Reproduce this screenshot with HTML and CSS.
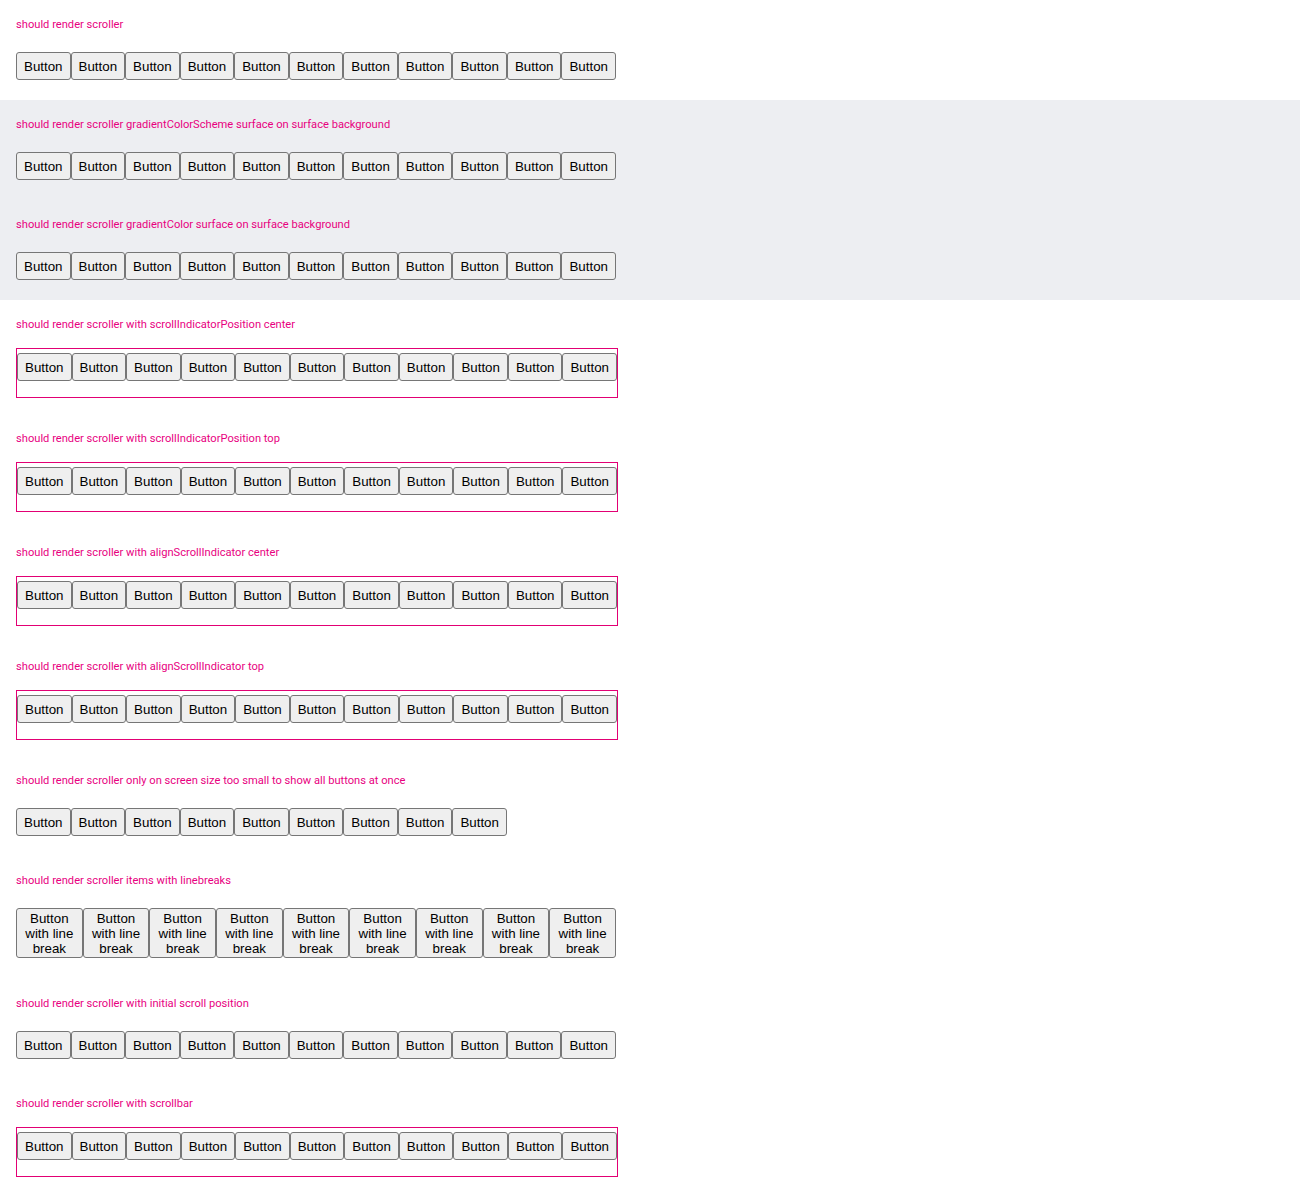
FILE: index.html
```html
<!DOCTYPE html>
<html>
<head>
<meta charset="utf-8">
<link rel="stylesheet" href="styles.css">
</head>
<body>
<div class="section">
  <div class="label">should render scroller</div>
  <div class="scroller">
    <button class="btn">Button</button><button class="btn">Button</button><button class="btn">Button</button><button class="btn">Button</button><button class="btn">Button</button><button class="btn">Button</button><button class="btn">Button</button><button class="btn">Button</button><button class="btn">Button</button><button class="btn">Button</button><button class="btn">Button</button>
  </div>
</div>
<div class="surface">
  <div class="section">
    <div class="label">should render scroller gradientColorScheme surface on surface background</div>
    <div class="scroller">
      <button class="btn">Button</button><button class="btn">Button</button><button class="btn">Button</button><button class="btn">Button</button><button class="btn">Button</button><button class="btn">Button</button><button class="btn">Button</button><button class="btn">Button</button><button class="btn">Button</button><button class="btn">Button</button><button class="btn">Button</button>
    </div>
  </div>
  <div class="section">
    <div class="label">should render scroller gradientColor surface on surface background</div>
    <div class="scroller">
      <button class="btn">Button</button><button class="btn">Button</button><button class="btn">Button</button><button class="btn">Button</button><button class="btn">Button</button><button class="btn">Button</button><button class="btn">Button</button><button class="btn">Button</button><button class="btn">Button</button><button class="btn">Button</button><button class="btn">Button</button>
    </div>
  </div>
</div>
<div class="section boxed">
  <div class="label">should render scroller with scrollIndicatorPosition center</div>
  <div class="scroller framed">
    <button class="btn">Button</button><button class="btn">Button</button><button class="btn">Button</button><button class="btn">Button</button><button class="btn">Button</button><button class="btn">Button</button><button class="btn">Button</button><button class="btn">Button</button><button class="btn">Button</button><button class="btn">Button</button><button class="btn">Button</button>
  </div>
</div>
<div class="section boxed">
  <div class="label">should render scroller with scrollIndicatorPosition top</div>
  <div class="scroller framed">
    <button class="btn">Button</button><button class="btn">Button</button><button class="btn">Button</button><button class="btn">Button</button><button class="btn">Button</button><button class="btn">Button</button><button class="btn">Button</button><button class="btn">Button</button><button class="btn">Button</button><button class="btn">Button</button><button class="btn">Button</button>
  </div>
</div>
<div class="section boxed">
  <div class="label">should render scroller with alignScrollIndicator center</div>
  <div class="scroller framed">
    <button class="btn">Button</button><button class="btn">Button</button><button class="btn">Button</button><button class="btn">Button</button><button class="btn">Button</button><button class="btn">Button</button><button class="btn">Button</button><button class="btn">Button</button><button class="btn">Button</button><button class="btn">Button</button><button class="btn">Button</button>
  </div>
</div>
<div class="section boxed">
  <div class="label">should render scroller with alignScrollIndicator top</div>
  <div class="scroller framed">
    <button class="btn">Button</button><button class="btn">Button</button><button class="btn">Button</button><button class="btn">Button</button><button class="btn">Button</button><button class="btn">Button</button><button class="btn">Button</button><button class="btn">Button</button><button class="btn">Button</button><button class="btn">Button</button><button class="btn">Button</button>
  </div>
</div>
<div class="section">
  <div class="label">should render scroller only on screen size too small to show all buttons at once</div>
  <div class="scroller">
    <button class="btn">Button</button><button class="btn">Button</button><button class="btn">Button</button><button class="btn">Button</button><button class="btn">Button</button><button class="btn">Button</button><button class="btn">Button</button><button class="btn">Button</button><button class="btn">Button</button>
  </div>
</div>
<div class="section tall">
  <div class="label">should render scroller items with linebreaks</div>
  <div class="scroller">
    <button class="btn wrap">Button with line break</button><button class="btn wrap">Button with line break</button><button class="btn wrap">Button with line break</button><button class="btn wrap">Button with line break</button><button class="btn wrap">Button with line break</button><button class="btn wrap">Button with line break</button><button class="btn wrap">Button with line break</button><button class="btn wrap">Button with line break</button><button class="btn wrap">Button with line break</button>
  </div>
</div>
<div class="section">
  <div class="label">should render scroller with initial scroll position</div>
  <div class="scroller">
    <button class="btn">Button</button><button class="btn">Button</button><button class="btn">Button</button><button class="btn">Button</button><button class="btn">Button</button><button class="btn">Button</button><button class="btn">Button</button><button class="btn">Button</button><button class="btn">Button</button><button class="btn">Button</button><button class="btn">Button</button>
  </div>
</div>
<div class="section boxed">
  <div class="label">should render scroller with scrollbar</div>
  <div class="scroller framed">
    <button class="btn">Button</button><button class="btn">Button</button><button class="btn">Button</button><button class="btn">Button</button><button class="btn">Button</button><button class="btn">Button</button><button class="btn">Button</button><button class="btn">Button</button><button class="btn">Button</button><button class="btn">Button</button><button class="btn">Button</button>
  </div>
</div>
</body>
</html>
```
FILE: styles.css
```css
html, body {
  margin: 0;
  padding: 0;
  background: #ffffff;
}
body {
  font-family: "Liberation Sans", Arial, sans-serif;
}
.surface {
  background: #edeef2;
}
.section {
  padding: 16px 16px 20px;
}
.section.boxed {
  padding-bottom: 16px;
}
.section.tall {
  padding-bottom: 21px;
}
.label {
  padding-top: 1px;
  font-family: Roboto, "Noto Sans", sans-serif;
  font-size: 11.15px;
  line-height: 16px;
  color: #e8007f;
}
.scroller {
  display: flex;
  margin-top: 19px;
  width: 600px;
}
.scroller.framed {
  margin-top: 15px;
  border: 1px solid #e20074;
  padding: 4px 0 16px;
}
.btn {
  flex: 0 0 auto;
  box-sizing: border-box;
  height: 28px;
  margin: 0;
  padding: 0 7px;
  font-family: "Liberation Sans", Arial, sans-serif;
  font-size: 13.333px;
  line-height: 15px;
  color: #000000;
  background: #efefef;
  border: 1px solid #767676;
  border-radius: 3px;
  white-space: nowrap;
}
.btn.wrap {
  width: 66.667px;
  height: 50px;
  padding: 0 4px;
  white-space: normal;
  text-align: center;
}
```
